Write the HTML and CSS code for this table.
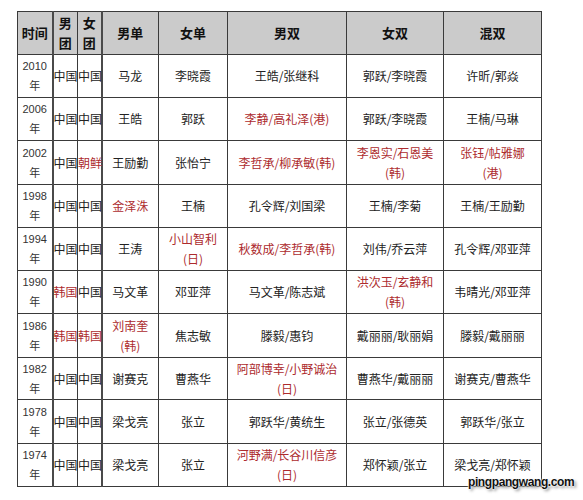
FILE: index.html
```html
<!DOCTYPE html>
<html lang="zh-CN">
<head>
<meta charset="utf-8">
<title>世乒赛冠军</title>
<link rel="stylesheet" href="styles.css">
</head>
<body>
<div class="page">
  <table class="results">
    <colgroup>
      <col class="w-year"><col class="w-team1"><col class="w-team2"><col class="w-ms"><col class="w-ws"><col class="w-md"><col class="w-wd"><col class="w-xd">
    </colgroup>
    <thead>
      <tr>
        <th>时间</th><th class="c2">男<br>团</th><th class="c3">女<br>团</th><th>男单</th><th>女单</th><th>男双</th><th>女双</th><th>混双</th>
      </tr>
    </thead>
    <tbody>
      <tr>
        <td class="yr">2010<br>年</td><td class="c2">中国</td><td class="c3">中国</td><td>马龙</td><td>李晓霞</td><td>王皓/张继科</td><td>郭跃/李晓霞</td><td>许昕/郭焱</td>
      </tr>
      <tr>
        <td class="yr">2006<br>年</td><td class="c2">中国</td><td class="c3">中国</td><td>王皓</td><td>郭跃</td><td class="red">李静/高礼泽(港)</td><td>郭跃/李晓霞</td><td>王楠/马琳</td>
      </tr>
      <tr class="tall">
        <td class="yr">2002<br>年</td><td class="c2">中国</td><td class="c3 red">朝鲜</td><td>王励勤</td><td>张怡宁</td><td class="red">李哲承/柳承敏(韩)</td><td class="red">李恩实/石恩美<br>(韩)</td><td class="red">张钰/帖雅娜<br>(港)</td>
      </tr>
      <tr>
        <td class="yr">1998<br>年</td><td class="c2">中国</td><td class="c3">中国</td><td class="red">金泽洙</td><td>王楠</td><td>孔令辉/刘国梁</td><td>王楠/李菊</td><td>王楠/王励勤</td>
      </tr>
      <tr>
        <td class="yr">1994<br>年</td><td class="c2">中国</td><td class="c3">中国</td><td>王涛</td><td class="red">小山智利<br>(日)</td><td class="red">秋数成/李哲承(韩)</td><td>刘伟/乔云萍</td><td>孔令辉/邓亚萍</td>
      </tr>
      <tr>
        <td class="yr">1990<br>年</td><td class="c2 red">韩国</td><td class="c3">中国</td><td>马文革</td><td>邓亚萍</td><td>马文革/陈志斌</td><td class="red">洪次玉/玄静和<br>(韩)</td><td>韦晴光/邓亚萍</td>
      </tr>
      <tr class="tall">
        <td class="yr">1986<br>年</td><td class="c2 red">韩国</td><td class="c3 red">韩国</td><td class="red">刘南奎<br>(韩)</td><td>焦志敏</td><td>滕毅/惠钧</td><td>戴丽丽/耿丽娟</td><td>滕毅/戴丽丽</td>
      </tr>
      <tr class="short">
        <td class="yr">1982<br>年</td><td class="c2">中国</td><td class="c3">中国</td><td>谢赛克</td><td>曹燕华</td><td class="red">阿部博幸/小野诚治<br>(日)</td><td>曹燕华/戴丽丽</td><td>谢赛克/曹燕华</td>
      </tr>
      <tr class="tall">
        <td class="yr">1978<br>年</td><td class="c2">中国</td><td class="c3">中国</td><td>梁戈亮</td><td>张立</td><td>郭跃华/黄统生</td><td>张立/张德英</td><td>郭跃华/张立</td>
      </tr>
      <tr>
        <td class="yr">1974<br>年</td><td class="c2">中国</td><td class="c3">中国</td><td>梁戈亮</td><td>张立</td><td class="red">河野满/长谷川信彦<br>(日)</td><td>郑怀颖/张立</td><td>梁戈亮/郑怀颖</td>
      </tr>
    </tbody>
  </table>
  <div class="watermark">pingpangwang.com</div>
</div>
</body>
</html>
```
FILE: styles.css
```css
html, body {
  margin: 0;
  padding: 0;
  background: #ffffff;
}

.page {
  position: relative;
  width: 583px;
  height: 500px;
  padding: 11px 0 0 17px;
  box-sizing: border-box;
  font-family: "Noto Sans CJK SC", "Liberation Sans", sans-serif;
  color: #222222;
}

.results {
  border-collapse: collapse;
  table-layout: fixed;
  width: 525px;
  font-size: 12px;
  line-height: 20px;
}

.w-year { width: 35px; }
.w-team1 { width: 25px; }
.w-team2 { width: 24px; }
.w-ms { width: 57px; }
.w-ws { width: 69px; }
.w-md { width: 119px; }
.w-wd { width: 97px; }
.w-xd { width: 98px; }

.results th,
.results td {
  border: 1px solid #3a3a3a;
  padding: 0;
  text-align: center;
  vertical-align: middle;
  white-space: nowrap;
  overflow: visible;
}

.results tr {
  height: 43px;
}

.results tr.tall {
  height: 44px;
}

.results tr.short {
  height: 42px;
}

.results th {
  background: #cbcbcb;
  font-weight: bold;
  font-size: 13px;
  color: #111111;
}

.results .c2 {
  border-left: 2px solid #4a4a4a;
}

.results .c3 {
  border-right: 2px solid #4a4a4a;
}

.results td.yr {
  font-family: "Liberation Sans", "Noto Sans CJK SC", sans-serif;
  font-size: 11px;
  color: #333333;
}

.results .red {
  color: #ad2b2e;
}

.watermark {
  position: absolute;
  left: 468px;
  top: 475px;
  font-family: "Liberation Sans", sans-serif;
  font-weight: bold;
  font-size: 12px;
  letter-spacing: -0.4px;
  line-height: 14px;
  color: #111111;
  text-shadow: 0 0 2px #ffffff, 0 0 2px #ffffff, 0 0 1px #ffffff, 2px 2px 3px #8a8a8a;
}
```
